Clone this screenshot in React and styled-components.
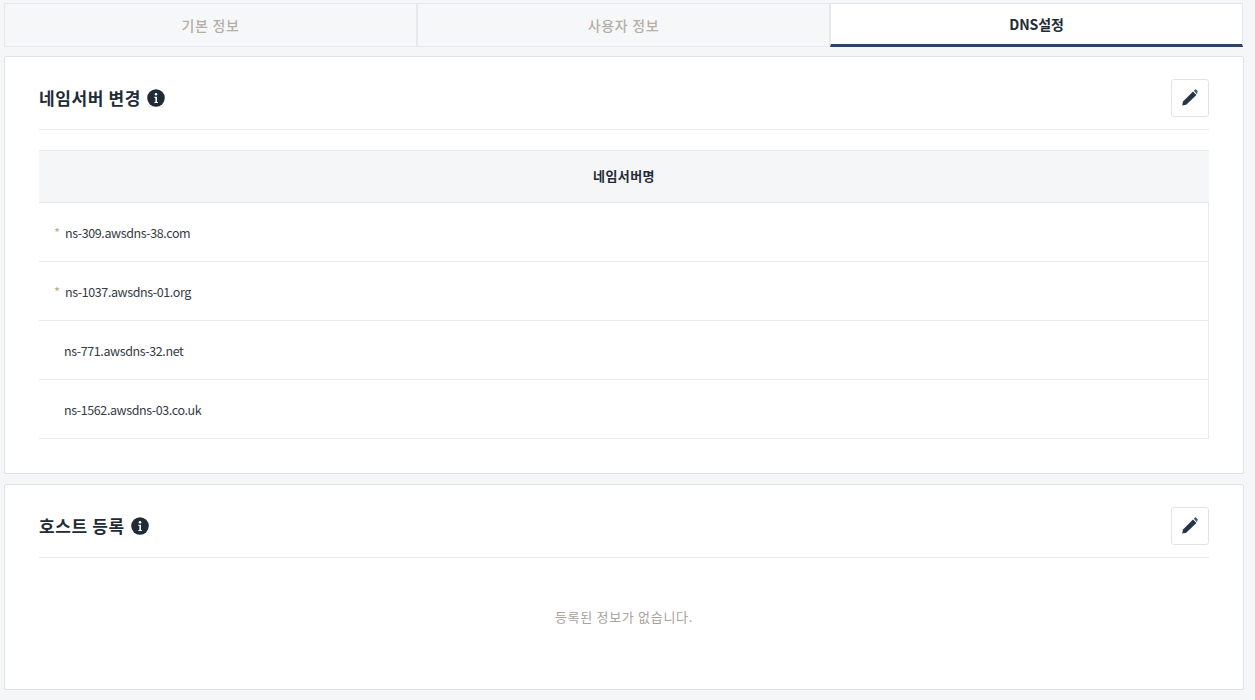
import React from "react";
import styled, { createGlobalStyle } from "styled-components";

const GlobalStyle = createGlobalStyle`
  html, body {
    margin: 0;
    padding: 0;
    background: #f4f6f8;
  }
  body {
    font-family: "Noto Sans CJK KR", "Noto Sans", sans-serif;
    color: #212b36;
  }
`;

const Page = styled.div`
  display: flex;
  flex-direction: column;
  width: 1240px;
  padding: 3px 0 0 4px;
`;

const Tabs = styled.div`
  display: grid;
  grid-template-columns: 413px 413px 413px;
  height: 44px;
  margin-bottom: 9px;
`;

const Tab = styled.div`
  display: flex;
  align-items: center;
  justify-content: center;
  box-sizing: border-box;
  font-size: 14px;
  font-weight: ${(p) => (p.$active ? 700 : 500)};
  letter-spacing: ${(p) => (p.$active ? "-0.1px" : "0.7px")};
  color: ${(p) => (p.$active ? "#212b36" : "#b5aea6")};
  background: ${(p) => (p.$active ? "#fff" : "#f6f7f9")};
  border: 1px solid #e6e9ec;
  border-bottom: ${(p) => (p.$active ? "3px solid #2b4468" : "1px solid #e6e9ec")};
`;

const Card = styled.section`
  box-sizing: border-box;
  height: ${(p) => p.$height}px;
  margin-bottom: 10px;
  padding: 0 34px;
  background: #fff;
  border: 1px solid #dfe3e8;
  border-radius: 2px;
`;

const CardHeader = styled.header`
  display: flex;
  align-items: center;
  justify-content: space-between;
  box-sizing: border-box;
  height: 73px;
  padding-top: 10px;
  border-bottom: 1px solid #e8eaed;
`;

const TitleRow = styled.div`
  display: flex;
  align-items: center;
  gap: 6px;
`;

const Title = styled.h2`
  margin: 0 0 2px;
  font-size: 17px;
  font-weight: 700;
  letter-spacing: 0.6px;
  color: #212b36;
`;

const InfoBadge = styled.svg`
  width: 18px;
  height: 18px;
  display: block;
`;

const EditButton = styled.button`
  display: flex;
  align-items: center;
  justify-content: center;
  box-sizing: border-box;
  width: 38px;
  height: 38px;
  padding: 0;
  background: #fff;
  border: 1px solid #dfe3e8;
  border-radius: 3px;
`;

const PencilSvg = styled.svg`
  display: block;
  width: 16px;
  height: 17px;
  margin: 0 1px 1px 0;
`;

const Table = styled.div`
  margin-top: 20px;
`;

const TableHead = styled.div`
  display: flex;
  align-items: center;
  justify-content: center;
  box-sizing: border-box;
  height: 53px;
  padding-bottom: 2px;
  font-size: 13px;
  font-weight: 700;
  letter-spacing: 0.4px;
  color: #212b36;
  background: #f4f6f8;
  border-top: 1px solid #e8eaed;
  border-bottom: 1px solid #e3e6ea;
`;

const Row = styled.div`
  display: flex;
  align-items: center;
  box-sizing: border-box;
  height: 59px;
  padding-left: 15px;
  font-size: 12.5px;
  letter-spacing: -0.4px;
  color: #333c45;
  border-bottom: 1px solid #e8eaed;
  border-right: 1px solid #e8eaed;
`;

const Mark = styled.span`
  width: 11px;
  font-size: 13px;
  letter-spacing: 0;
  color: #c2a98c;
`;

const Spacer = styled.span`
  width: 10px;
`;

const Empty = styled.div`
  display: flex;
  align-items: center;
  justify-content: center;
  height: 117px;
  font-size: 13px;
  letter-spacing: 0.7px;
  color: #a8a29a;
`;

const InfoIcon = () => (
  <InfoBadge viewBox="0 0 17 17">
    <circle cx="8.5" cy="8.5" r="8.3" fill="#212b36" />
    <circle cx="8.5" cy="5" r="1.2" fill="#fff" />
    <path d="M7 7.3h2.4v4.9h.9v1.1H7v-1.1h.9V8.4H7z" fill="#fff" />
  </InfoBadge>
);

const PencilIcon = () => (
  <PencilSvg viewBox="0 0 16 17">
    <path d="M0.2 16.6L1 12.6 11 2.6 14.4 6 4.2 15.8z" fill="#26344a" />
    <path d="M11.8 1.8L13 0.6a0.8 0.8 0 0 1 1.1 0l1.4 1.4a0.8 0.8 0 0 1 0 1.1L15 5.2z" fill="#4a5a70" />
  </PencilSvg>
);

const nameServers = [
  { name: "ns-309.awsdns-38.com", required: true },
  { name: "ns-1037.awsdns-01.org", required: true },
  { name: "ns-771.awsdns-32.net" },
  { name: "ns-1562.awsdns-03.co.uk" },
];

const App = () => (
  <>
    <GlobalStyle />
    <Page>
      <Tabs>
        <Tab>기본 정보</Tab>
        <Tab>사용자 정보</Tab>
        <Tab $active>DNS설정</Tab>
      </Tabs>

      <Card $height={418}>
        <CardHeader>
          <TitleRow>
            <Title>네임서버 변경</Title>
            <InfoIcon />
          </TitleRow>
          <EditButton aria-label="edit">
            <PencilIcon />
          </EditButton>
        </CardHeader>
        <Table>
          <TableHead>네임서버명</TableHead>
          {nameServers.map((item) => (
            <Row key={item.name}>
              {item.required ? <Mark>*</Mark> : <Spacer />}
              {item.name}
            </Row>
          ))}
        </Table>
      </Card>

      <Card $height={206}>
        <CardHeader>
          <TitleRow>
            <Title>호스트 등록</Title>
            <InfoIcon />
          </TitleRow>
          <EditButton aria-label="edit">
            <PencilIcon />
          </EditButton>
        </CardHeader>
        <Empty>등록된 정보가 없습니다.</Empty>
      </Card>
    </Page>
  </>
);

export default App;
